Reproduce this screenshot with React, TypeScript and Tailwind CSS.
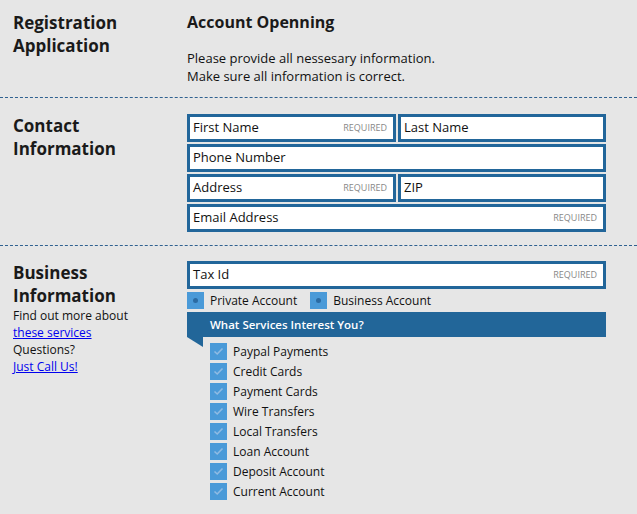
import React from "react";

const Field = ({ label, required, className = "" }: { label: string; required?: boolean; className?: string }) => (
  <div className={`h-[28px] border-[3px] border-[#22669a] bg-white flex items-center justify-between pl-[3px] pr-[6px] ${className}`}>
    <span className="text-[13px] text-[#111]">{label}</span>
    {required && <span className="text-[9px] text-[#888]">REQUIRED</span>}
  </div>
);

const Radio = ({ label }: { label: string }) => (
  <div className="flex items-center gap-[6px] h-[17px]">
    <div className="w-[17px] h-[17px] bg-[#4a9ad8] flex items-center justify-center">
      <div className="w-[5px] h-[5px] rounded-full bg-[#2b6ba3]" />
    </div>
    <span className="text-[12px] leading-[17px] text-[#111]">{label}</span>
  </div>
);

const Check = ({ label }: { label: string }) => (
  <div className="flex items-center gap-[6px] h-[17px]">
    <div className="w-[17px] h-[17px] bg-[#4a9ad8] flex items-center justify-center">
      <svg width="11" height="9" viewBox="0 0 11 9">
        <path d="M1.5 4.5 L4.2 7 L9.5 1.5" fill="none" stroke="#8fbbe3" strokeWidth="1.6" />
      </svg>
    </div>
    <span className="text-[12px] text-[#111] leading-[17px]">{label}</span>
  </div>
);

export default function App() {
  const services = [
    "Paypal Payments",
    "Credit Cards",
    "Payment Cards",
    "Wire Transfers",
    "Local Transfers",
    "Loan Account",
    "Deposit Account",
    "Current Account",
  ];
  return (
    <div className="w-[637px] h-[514px] bg-[#e6e6e6] overflow-hidden" style={{ fontFamily: '"Open Sans", sans-serif' }}>
      {/* Section 1 */}
      <div className="grid grid-cols-[187px_419px] pt-[11px] pb-[12px] border-b border-dashed border-[#2f6190]">
        <div className="pl-[13px] text-[17px] font-bold leading-[23px] text-[#1a1a1a]">
          Registration
          <br />
          Application
        </div>
        <div>
          <div className="text-[16px] font-bold leading-[23px] text-[#1a1a1a]">Account Openning</div>
          <div className="mt-[15px] text-[13px] leading-[18px] text-[#111]">
            Please provide all nessesary information.
            <br />
            Make sure all information is correct.
          </div>
        </div>
      </div>

      {/* Section 2 */}
      <div className="grid grid-cols-[187px_419px] pt-[16px] pb-[13px] border-b border-dashed border-[#2f6190]">
        <div className="pl-[13px] text-[17px] font-bold leading-[23px] text-[#1a1a1a]">
          Contact
          <br />
          Information
        </div>
        <div className="flex flex-col gap-[2px]">
          <div className="grid grid-cols-[209px_208px] gap-[2px]">
            <Field label="First Name" required />
            <Field label="Last Name" />
          </div>
          <Field label="Phone Number" />
          <div className="grid grid-cols-[209px_208px] gap-[2px]">
            <Field label="Address" required />
            <Field label="ZIP" />
          </div>
          <Field label="Email Address" required />
        </div>
      </div>

      {/* Section 3 */}
      <div className="grid grid-cols-[187px_419px] pt-[15px]">
        <div className="pl-[13px]">
          <div className="text-[17px] font-bold leading-[23px] text-[#1a1a1a]">
            Business
            <br />
            Information
          </div>
          <div className="text-[12px] leading-[17px] text-[#111]">
            Find out more about
            <br />
            <a href="#" className="text-[#0000ee] underline">these services</a>
            <br />
            Questions?
            <br />
            <a href="#" className="text-[#0000ee] underline">Just Call Us!</a>
          </div>
        </div>
        <div className="flex flex-col">
          <Field label="Tax Id" required />
          <div className="mt-[3px] flex items-center gap-[13px]">
            <Radio label="Private Account" />
            <Radio label="Business Account" />
          </div>
          <div className="relative mt-[3px] h-[25px] bg-[#226699] flex items-center pl-[23px]">
            <span className="text-[11.5px] font-semibold text-white">What Services Interest You?</span>
            <div className="absolute left-0 top-[25px] w-0 h-0 border-t-[10px] border-t-[#226699] border-l-[16px] border-l-transparent" />
          </div>
          <div className="mt-[6px] pl-[23px] flex flex-col gap-[3px]">
            {services.map((s) => (
              <Check key={s} label={s} />
            ))}
          </div>
        </div>
      </div>
    </div>
  );
}
